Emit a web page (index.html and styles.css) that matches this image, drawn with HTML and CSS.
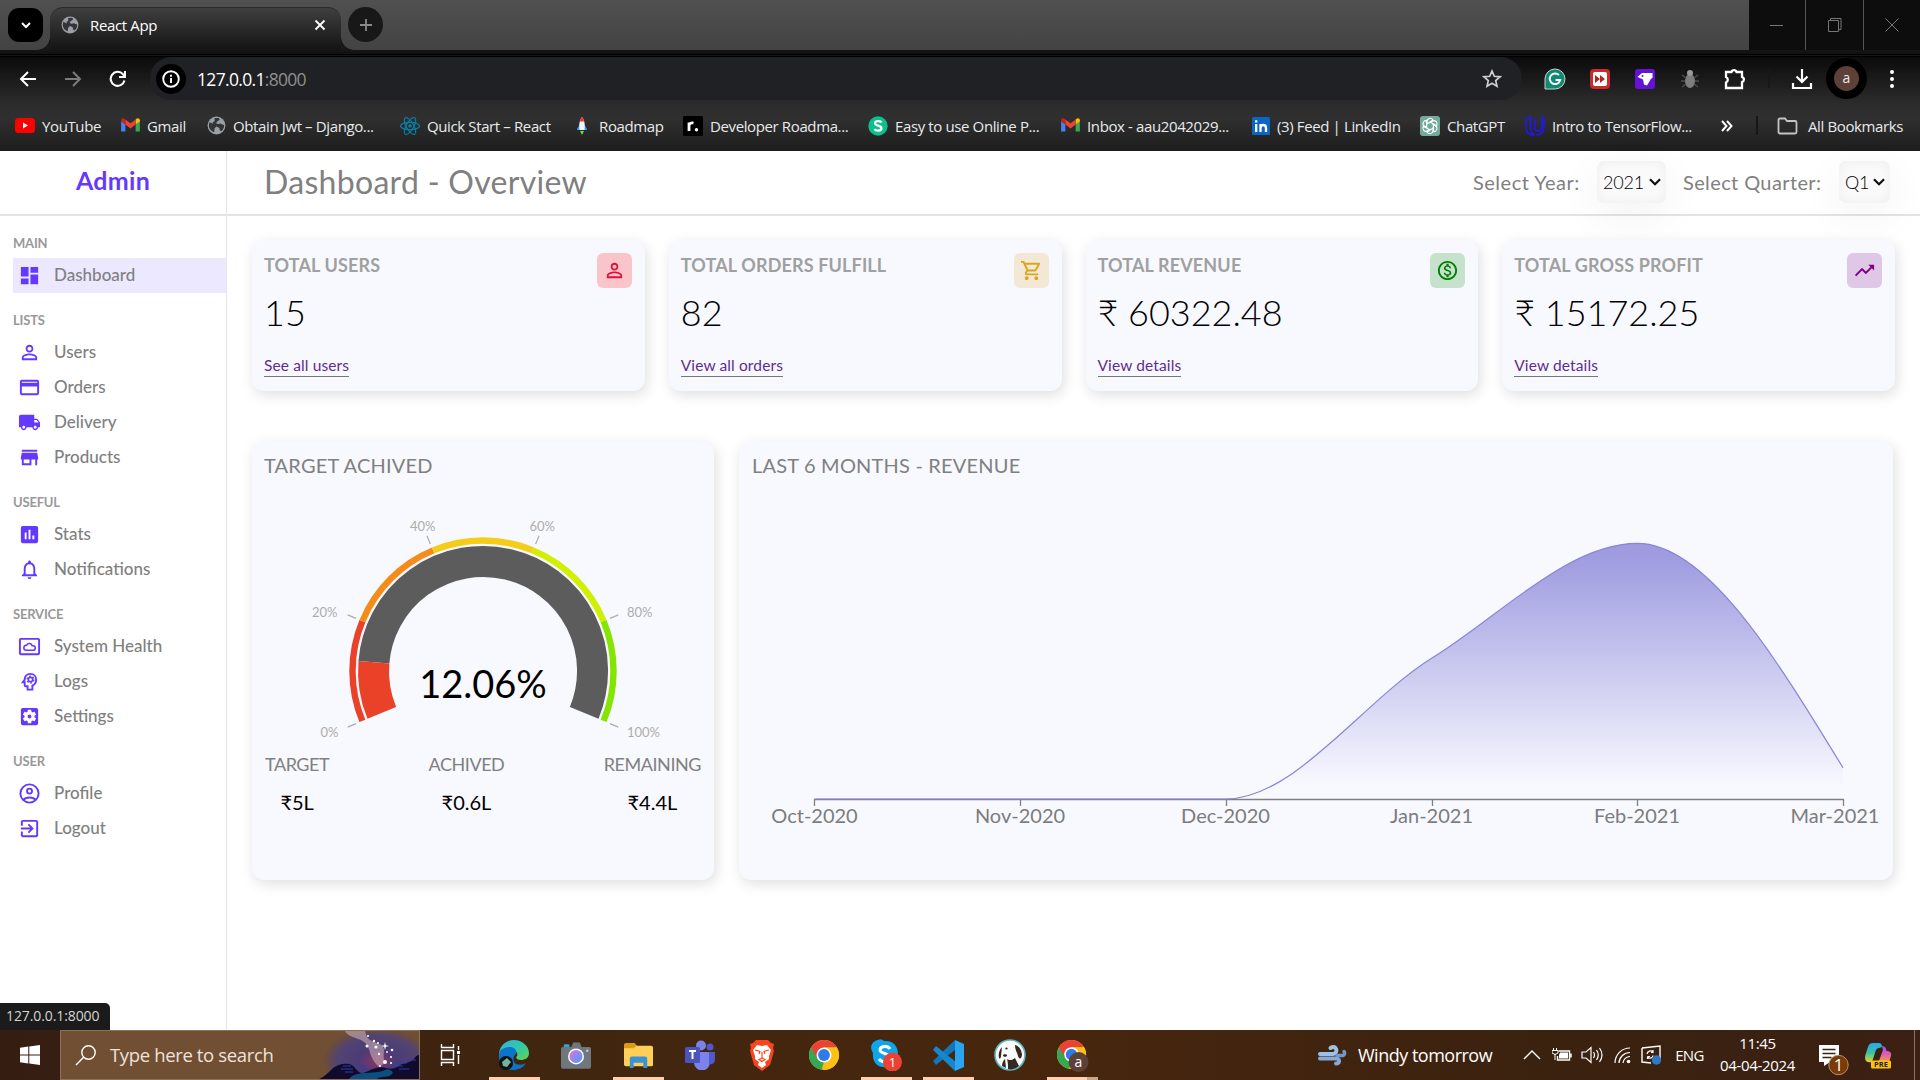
FILE: index.html
```html
<!DOCTYPE html>
<html lang="en">
<head>
<meta charset="utf-8">
<title>React App</title>
<link rel="stylesheet" href="styles.css">
</head>
<body>
<svg class="defs" width="0" height="0">
  <defs>
    <symbol id="globe" viewBox="0 0 20 20"><circle cx="10" cy="10" r="9.4" fill="#9aa0a6"/><path d="M2.500 6.500 6 8l3 1 1 2-2 2-.5 4C4 16 1.800 13 2 9.500zM8 2.200l4.500-.2 1 2-2.500 1.500-1.500 2 2 1 3-.5 1.500 1 2 .5c.2 3-1 5-3 6.500l-1.500-1-.5-2.500-3-1.500-3-2-1-2.500 2-1z" fill="#333438"/></symbol>
    <symbol id="gmail" viewBox="0 0 20 16"><path d="M0 3v11.500h4.500V7z" fill="#4285f4"/><path d="M20 3v11.500h-4.500V7z" fill="#34a853"/><path d="M15.500 1.500V7L20 3.700V2.500C20 .3 17.600-.6 15.500 1.500z" fill="#fbbc04"/><path d="M0 2.500V3.700L4.500 7V1.500C2.400-.6 0 .3 0 2.500z" fill="#c5221f"/><path d="M4.500 1.500 10 5.700l5.500-4.200V7L10 11.200 4.500 7z" fill="#ea4335"/></symbol>
    <symbol id="chrome" viewBox="0 0 32 32"><circle cx="16" cy="16" r="15" fill="#fbbc05"/><path d="M16 16 8.500 20.500 3 8.500A15 15 0 0 1 29 8.500H16z" fill="#ea4335"/><path d="M3 8.500 9.500 19.800 16 23l-2.500 7.800A15 15 0 0 1 3 8.500z" fill="#34a853"/><path d="M29 8.500H16L22.500 20l-7 11A15 15 0 0 0 29 8.500z" fill="#fbc116"/><circle cx="16" cy="16" r="7.500" fill="#fff"/><circle cx="16" cy="16" r="5.900" fill="#2f7bea"/></symbol>
    <symbol id="person" viewBox="0 0 24 24"><path d="M12 5.900c1.160 0 2.100.94 2.100 2.100s-.94 2.100-2.100 2.100S9.900 9.160 9.900 8s.94-2.100 2.100-2.100m0 9c2.970 0 6.100 1.460 6.100 2.100v1.100H5.900V17c0-.64 3.130-2.100 6.100-2.100M12 4C9.790 4 8 5.790 8 8s1.790 4 4 4 4-1.790 4-4-1.790-4-4-4zm0 9c-2.670 0-8 1.340-8 4v3h16v-3c0-2.660-5.330-4-8-4z"/></symbol>
    <linearGradient id="edgeA" x1="0" y1="0" x2="1" y2="1"><stop offset="0" stop-color="#2bb3e8"/><stop offset=".55" stop-color="#35c8a5"/><stop offset="1" stop-color="#63d648"/></linearGradient>
    <linearGradient id="lens" x1="0" y1="0" x2="1" y2="1"><stop offset=".2" stop-color="#c879e6"/><stop offset="1" stop-color="#3ca2f5"/></linearGradient>
    <linearGradient id="copA" x1="0" y1="0" x2="0" y2="1"><stop offset="0" stop-color="#2aa7f0"/><stop offset=".5" stop-color="#37c2a0"/><stop offset="1" stop-color="#e8cf2e"/></linearGradient>
    <linearGradient id="copB" x1="0" y1="0" x2="0" y2="1"><stop offset="0" stop-color="#8d5bf0"/><stop offset=".5" stop-color="#e05bb2"/><stop offset="1" stop-color="#f59a4a"/></linearGradient>
    <linearGradient id="area" x1="0" y1="0" x2="0" y2="1"><stop offset=".05" stop-color="#8884d8" stop-opacity=".8"/><stop offset=".95" stop-color="#8884d8" stop-opacity="0"/></linearGradient>
    <radialGradient id="sky"><stop offset="0" stop-color="#8b3560"/><stop offset=".35" stop-color="#4b3b78"/><stop offset=".75" stop-color="#4b4180" stop-opacity=".8"/><stop offset="1" stop-color="#5a4560" stop-opacity="0"/></radialGradient>
  </defs>
</svg>

<header class="browser">
  <div class="tabstrip">
    <button class="tab-search"><svg width="14" height="14" viewBox="0 0 14 14"><path d="M3 5l4 4 4-4" fill="none" stroke="#fff" stroke-width="2"/></svg></button>
    <div class="tab"><svg width="18" height="18"><use href="#globe"/></svg><span class="tab-title">React App</span><svg width="12" height="12" viewBox="0 0 12 12"><path d="M1.500 1.500l9 9m0-9l-9 9" stroke="#fff" stroke-width="1.800"/></svg></div>
    <button class="new-tab"><svg width="14" height="14" viewBox="0 0 14 14"><path d="M7 1v12M1 7h12" stroke="#8a8a8a" stroke-width="1.800"/></svg></button>
    <div class="win-controls">
      <span><svg width="14" height="14" viewBox="0 0 14 14"><path d="M0 7.500h13" stroke="#777"/></svg></span>
      <span><svg width="14" height="14" viewBox="0 0 14 14"><path d="M.5 2.500h10v11H.5zM2.500 2.500v-2h10.500v11h-2.500" fill="none" stroke="#777"/></svg></span>
      <span><svg width="14" height="14" viewBox="0 0 14 14"><path d="M.5.5l13 13m0-13l-13 13" stroke="#777"/></svg></span>
    </div>
  </div>
  <div class="toolbar">
    <div class="nav">
      <svg width="18" height="18" viewBox="0 0 18 18"><path d="M17 9H2.500M9 2 2 9l7 7" fill="none" stroke="#fff" stroke-width="2"/></svg>
      <svg width="18" height="18" viewBox="0 0 18 18"><path d="M1 9h14.500M9 2l7 7-7 7" fill="none" stroke="#7c7c7c" stroke-width="2"/></svg>
      <svg width="18" height="18" viewBox="0 0 18 18"><path d="M15.500 10.500A7 7 0 1 1 14 4.200L16 6.500" fill="none" stroke="#fff" stroke-width="2.100"/><path d="M17 1v7h-7V6h5V1z" fill="#fff"/></svg>
    </div>
    <div class="omnibox">
      <span class="info"><svg width="18" height="18" viewBox="0 0 18 18"><circle cx="9" cy="9" r="7.800" fill="none" stroke="#fff" stroke-width="1.900"/><path d="M9 8v5M9 4.800v2" stroke="#fff" stroke-width="1.900"/></svg></span>
      <span class="url">127.0.0.1<i>:8000</i></span>
      <svg class="star" width="20" height="20" viewBox="0 0 20 20"><path d="M10 2l2.300 5.300 5.700.5-4.300 3.800 1.300 5.600-5-3-5 3 1.300-5.600L2 7.800l5.700-.5z" fill="none" stroke="#d0d0d0" stroke-width="1.700"/></svg>
    </div>
    <div class="extensions">
      <svg width="22" height="22" viewBox="0 0 22 22"><path d="M1 21V11a10 10 0 1 1 10 10z" fill="#0f8a72" stroke="#c9d2cf"/><path d="M15 7.200A5.300 5.300 0 1 0 16.200 12H11.500" fill="none" stroke="#fff" stroke-width="1.900"/></svg>
      <svg width="20" height="20" viewBox="0 0 20 20"><rect width="20" height="20" rx="4" fill="#c92a2a"/><rect x="3" y="3" width="14" height="14" rx="2" fill="#fff"/><path d="M5 6l5 4-5 4zM10 6l5 4-5 4z" fill="#b32424"/></svg>
      <svg width="20" height="20" viewBox="0 0 20 20"><rect width="20" height="20" rx="3" fill="#6412d8"/><path d="M2.500 8 7 4h10.500v5q-2 0-2.500 2.500l-3 5-3-1-1-5z" fill="#fff"/><circle cx="7.500" cy="7" r="1" fill="#6412d8"/></svg>
      <svg width="18" height="20" viewBox="0 0 18 20"><ellipse cx="9" cy="12" rx="5" ry="7" fill="#7d7d7d"/><circle cx="9" cy="4" r="3" fill="#999"/><path d="M1 6l4 3M0 12h4M1 18l4-3M17 6l-4 3M18 12h-4M17 18l-4-3" stroke="#4c4c4c" stroke-width="1.500"/></svg>
      <svg width="22" height="22" viewBox="0 0 22 22"><path d="M2 4h5.500a2.600 2.600 0 0 1 5 0H18v5a2.600 2.600 0 0 1 0 5v6H2v-5.500a3 3 0 0 0 0-5.500z" fill="none" stroke="#fff" stroke-width="2.300"/></svg>
      <i class="sep"></i>
      <svg width="22" height="22" viewBox="0 0 22 22"><path d="M11 1v12M5.500 8.500 11 14l5.500-5.500M2 15v5h18v-5" fill="none" stroke="#fff" stroke-width="2.200"/></svg>
      <span class="avatar"><b>a</b></span>
      <svg width="6" height="20" viewBox="0 0 6 20"><g fill="#fff"><circle cx="3" cy="3" r="2"/><circle cx="3" cy="10" r="2"/><circle cx="3" cy="17" r="2"/></g></svg>
    </div>
  </div>
  <nav class="bookmarks">
    <a><svg width="20" height="15" viewBox="0 0 20 15"><rect width="20" height="15" rx="3.500" fill="#f00"/><path d="M8 4.500v6l5-3z" fill="#fff"/></svg><span>YouTube</span></a>
    <a><svg width="19" height="15"><use href="#gmail"/></svg><span>Gmail</span></a>
    <a><svg width="19" height="19"><use href="#globe"/></svg><span>Obtain Jwt – Django...</span></a>
    <a><svg width="20" height="20" viewBox="-10 -10 20 20"><g fill="none" stroke="#087ea4" stroke-width="1.200"><ellipse rx="9.500" ry="3.700"/><ellipse rx="9.500" ry="3.700" transform="rotate(60)"/><ellipse rx="9.500" ry="3.700" transform="rotate(120)"/></g><circle r="1.800" fill="#087ea4"/></svg><span>Quick Start – React</span></a>
    <a><svg width="20" height="20" viewBox="0 0 20 20"><path d="M5 13l3-5v6H5zM15 13l-3-5v6h3z" fill="#2aa3f4"/><path d="M10 1c3 4 3 8 2.500 13h-5C7 9 7 5 10 1z" fill="#f4f4f4"/><path d="M10 1c1.200 1.500 1.900 3 2.100 4.500H7.900C8.100 4 8.800 2.500 10 1z" fill="#e33"/><path d="M8 15h4l-2 4z" fill="#7bdb3a"/></svg><span>Roadmap</span></a>
    <a><svg width="20" height="20" viewBox="0 0 20 20"><rect width="20" height="20" rx="1.500" fill="#000"/><path d="M6 15V6.500M6 10c0-2.500 2-3.500 4.500-3" fill="none" stroke="#fff" stroke-width="2.800"/><circle cx="13.500" cy="13.700" r="1.700" fill="#fff"/></svg><span>Developer Roadma...</span></a>
    <a><svg width="20" height="20" viewBox="0 0 20 20"><circle cx="10" cy="10" r="9.700" fill="#0cc08e"/><path d="M13.500 6.500c-1-2-6.500-2-6.500.8 0 3 6.500 1.800 6.500 5 0 3-6 3-7 .7" fill="none" stroke="#fff" stroke-width="2.300"/></svg><span>Easy to use Online P...</span></a>
    <a><svg width="19" height="15"><use href="#gmail"/></svg><span>Inbox - aau2042029...</span></a>
    <a><svg width="18" height="18" viewBox="0 0 18 18"><rect width="18" height="18" rx="1.500" fill="#0a66c2"/><path d="M4.200 7v8M4.200 3.200v2.400M8.500 7v8M8.500 11c0-4 5.500-4 5.500 0v4" fill="none" stroke="#fff" stroke-width="2.300"/></svg><span>(3) Feed | LinkedIn</span></a>
    <a><svg width="20" height="20" viewBox="-10 -10 20 20"><rect x="-10" y="-10" width="20" height="20" rx="3" fill="#74aa9c"/><g fill="none" stroke="#fff" stroke-width="1.100"><path id="petal" d="M-3-1v-3.500a3.200 3.200 0 0 1 6-1.500L0-4-3-2.200"/><use href="#petal" transform="rotate(60)"/><use href="#petal" transform="rotate(120)"/><use href="#petal" transform="rotate(180)"/><use href="#petal" transform="rotate(240)"/><use href="#petal" transform="rotate(300)"/></g></svg><span>ChatGPT</span></a>
    <a><svg width="20" height="20" viewBox="0 0 20 20"><path d="M5.500 1 1 3v8c0 5 3 8 7 8 2 0 1-1 0-1.500C6 16.500 5.500 15 5.500 12zM10 3v9c0 3 4 4 6 1.500 1-1.500 1-2.500 1-4.500V1l2 1v9c0 5-4 8-8 8" fill="none" stroke="#2015ff" stroke-width="1.500"/></svg><span>Intro to TensorFlow...</span></a>
    <a><svg width="12" height="12" viewBox="0 0 12 12"><path d="M1 1l4.500 5L1 11M6 1l4.500 5L6 11" fill="none" stroke="#fff" stroke-width="2"/></svg></a>
    <i class="sep"></i>
    <a class="folder"><svg width="21" height="18" viewBox="0 0 21 18"><path d="M1.500 3a1.500 1.500 0 0 1 1.500-1.500h5l2 2.500h8A1.500 1.500 0 0 1 19.500 5.500v9.500a1.500 1.500 0 0 1-1.500 1.500H3A1.500 1.500 0 0 1 1.500 15z" fill="none" stroke="#c4c4c4" stroke-width="1.800"/></svg><span>All Bookmarks</span></a>
  </nav>
</header>

<div class="app">
  <aside class="sidebar">
    <div class="brand"><span>Admin</span></div>
    <nav class="menu">
      <h6>MAIN</h6>
      <a class="active"><svg viewBox="0 0 24 24"><path d="M3 13h8V3H3v10zm0 8h8v-6H3v6zm10 0h8V11h-8v10zm0-18v6h8V3h-8z"/></svg><span>Dashboard</span></a>
      <h6>LISTS</h6>
      <a><svg><use href="#person"/></svg><span>Users</span></a>
      <a><svg viewBox="0 0 24 24"><path d="M20 4H4c-1.110 0-1.990.89-1.990 2L2 18c0 1.110.89 2 2 2h16c1.110 0 2-.89 2-2V6c0-1.110-.89-2-2-2zm0 14H4v-7h16v7zm0-11H4V6h16v1z"/></svg><span>Orders</span></a>
      <a><svg viewBox="0 0 24 24"><path d="M20 8h-3V4H3c-1.100 0-2 .9-2 2v11h2c0 1.660 1.340 3 3 3s3-1.340 3-3h6c0 1.660 1.340 3 3 3s3-1.340 3-3h2v-5l-3-4zM6 18.500c-.83 0-1.500-.67-1.500-1.500s.67-1.500 1.500-1.500 1.500.67 1.500 1.500-.67 1.500-1.500 1.500zm13.500-9l1.960 2.500H17V9.500h2.500zm-1.500 9c-.83 0-1.500-.67-1.500-1.500s.67-1.500 1.500-1.500 1.500.67 1.500 1.500-.67 1.500-1.500 1.500z"/></svg><span>Delivery</span></a>
      <a><svg viewBox="0 0 24 24"><path d="M20 4H4v2h16V4zm1 10v-2l-1-5H4l-1 5v2h1v6h10v-6h4v6h2v-6h1zm-9 4H6v-4h6v4z"/></svg><span>Products</span></a>
      <h6>USEFUL</h6>
      <a><svg viewBox="0 0 24 24"><path d="M19 3H5c-1.100 0-2 .9-2 2v14c0 1.100.9 2 2 2h14c1.100 0 2-.9 2-2V5c0-1.100-.9-2-2-2zM9 17H7v-7h2v7zm4 0h-2V7h2v10zm4 0h-2v-4h2v4z"/></svg><span>Stats</span></a>
      <a><svg viewBox="0 0 24 24"><path d="M12 22c1.100 0 2-.9 2-2h-4c0 1.100.89 2 2 2zm6-6v-5c0-3.070-1.640-5.640-4.500-6.320V4c0-.83-.67-1.500-1.500-1.500s-1.500.67-1.500 1.500v.68C7.630 5.360 6 7.920 6 11v5l-2 2v1h16v-1l-2-2zm-2 1H8v-6c0-2.480 1.510-4.500 4-4.500s4 2.020 4 4.500v6z"/></svg><span>Notifications</span></a>
      <h6>SERVICE</h6>
      <a><svg viewBox="0 0 24 24"><path d="M21 3H3c-1.100 0-2 .9-2 2v14c0 1.100.9 2 2 2h18c1.100 0 2-.9 2-2V5c0-1.100-.9-2-2-2zm0 16H3V5h18v14z"/><path d="M8.500 16h7a2.400 2.400 0 0 0 .2-4.800h-.9a3.100 3.100 0 0 0-5.900-.4A2.600 2.600 0 0 0 8.500 16z" class="line"/></svg><span>System Health</span></a>
      <a><svg viewBox="0 0 24 24"><path d="M13 4C9.500 4 7 6.700 7 10l-2 2.700h2V16c0 .6.400 1 1 1h2v3.500h5V16.400c2.300-1 4-3.300 4-6.100C19 6.800 16.500 4 13 4z" class="line thick"/><circle cx="13" cy="10" r="2.300" class="line"/><circle cx="13" cy="10" r="3.600" class="line teeth"/></svg><span>Logs</span></a>
      <a><svg viewBox="0 0 24 24"><path d="M12 10c-1.100 0-2 .9-2 2s.9 2 2 2 2-.9 2-2-.9-2-2-2zm7-7H5c-1.110 0-2 .9-2 2v14c0 1.100.89 2 2 2h14c1.110 0 2-.9 2-2V5c0-1.100-.89-2-2-2zm-1.750 9c0 .23-.02.46-.05.68l1.480 1.160c.13.11.17.3.08.45l-1.400 2.420c-.09.15-.27.21-.43.15l-1.740-.7c-.36.28-.76.51-1.180.69l-.26 1.850c-.03.17-.18.3-.35.3h-2.800c-.17 0-.32-.13-.35-.29l-.26-1.850c-.43-.18-.82-.41-1.180-.69l-1.740.7c-.16.06-.34 0-.43-.15l-1.400-2.420c-.09-.15-.05-.34.08-.45l1.480-1.160c-.03-.23-.05-.46-.05-.69 0-.23.02-.46.05-.68l-1.480-1.160c-.13-.11-.17-.3-.08-.45l1.400-2.420c.09-.15.27-.21.43-.15l1.740.7c.36-.28.76-.51 1.180-.69l.26-1.850c.03-.17.18-.3.35-.3h2.800c.17 0 .32.13.35.29l.26 1.850c.43.18.82.41 1.180.69l1.740-.7c.16-.06.34 0 .43.15l1.400 2.420c.09.15.05.34-.08.45l-1.480 1.160c.03.23.05.46.05.69z"/></svg><span>Settings</span></a>
      <h6>USER</h6>
      <a><svg viewBox="0 0 24 24"><circle cx="12" cy="12" r="9.500" class="line thick"/><circle cx="12" cy="9.500" r="2.600" class="line thick"/><path d="M5.500 18.800c3-3.400 10-3.400 13 0" class="line thick"/></svg><span>Profile</span></a>
      <a><svg viewBox="0 0 24 24"><path d="M10.090 15.590L11.500 17l5-5-5-5-1.410 1.410L12.670 11H3v2h9.670l-2.580 2.590zM19 3H5c-1.110 0-2 .9-2 2v4h2V5h14v14H5v-4H3v4c0 1.100.89 2 2 2h14c1.100 0 2-.9 2-2V5c0-1.100-.9-2-2-2z"/></svg><span>Logout</span></a>
    </nav>
    <div class="status">127.0.0.1:8000</div>
  </aside>

  <main class="main">
    <div class="topbar">
      <h1>Dashboard - Overview</h1>
      <label class="l-year">Select Year:</label>
      <div class="select s-year"><span>2021</span><svg width="12" height="8" viewBox="0 0 12 8"><path d="M1 1.300l5 5 5-5" fill="none" stroke="#111" stroke-width="2.200"/></svg></div>
      <label class="l-quarter">Select Quarter:</label>
      <div class="select s-quarter"><span>Q1</span><svg width="12" height="8" viewBox="0 0 12 8"><path d="M1 1.300l5 5 5-5" fill="none" stroke="#111" stroke-width="2.200"/></svg></div>
    </div>

    <section class="widgets">
      <article class="card widget">
        <header><h3>TOTAL USERS</h3><span class="badge users"><svg><use href="#person"/></svg></span></header>
        <p class="num">15</p>
        <a>See all users</a>
      </article>
      <article class="card widget">
        <header><h3>TOTAL ORDERS FULFILL</h3><span class="badge orders"><svg viewBox="0 0 24 24"><path d="M15.550 13c.75 0 1.410-.41 1.750-1.030l3.580-6.490c.37-.66-.11-1.480-.87-1.480H5.210l-.94-2H1v2h2l3.600 7.590-1.350 2.440C4.520 15.370 5.480 17 7 17h12v-2H7l1.100-2h7.450zM6.160 6h12.150l-2.760 5H8.530L6.160 6zM7 18c-1.100 0-1.990.9-1.990 2S5.900 22 7 22s2-.9 2-2-.9-2-2-2zm10 0c-1.100 0-1.990.9-1.990 2s.89 2 1.990 2 2-.9 2-2-.9-2-2-2z"/></svg></span></header>
        <p class="num">82</p>
        <a>View all orders</a>
      </article>
      <article class="card widget">
        <header><h3>TOTAL REVENUE</h3><span class="badge revenue"><svg viewBox="0 0 24 24"><path d="M12 2C6.480 2 2 6.480 2 12s4.480 10 10 10 10-4.480 10-10S17.520 2 12 2zm0 18c-4.410 0-8-3.590-8-8s3.590-8 8-8 8 3.590 8 8-3.590 8-8 8zm.31-8.860c-1.770-.45-2.340-.94-2.340-1.670 0-.84.79-1.430 2.100-1.430 1.380 0 1.900.66 1.940 1.640h1.710c-.05-1.340-.87-2.570-2.490-2.970V5H10.900v1.690c-1.510.32-2.720 1.300-2.720 2.810 0 1.790 1.490 2.690 3.660 3.210 1.950.46 2.340 1.150 2.340 1.870 0 .53-.39 1.390-2.100 1.390-1.600 0-2.230-.72-2.320-1.640H8.040c.1 1.700 1.360 2.660 2.860 2.970V19h2.340v-1.670c1.520-.29 2.720-1.160 2.730-2.770-.01-2.200-1.900-2.960-3.660-3.420z"/></svg></span></header>
        <p class="num">₹ 60322.48</p>
        <a>View details</a>
      </article>
      <article class="card widget">
        <header><h3>TOTAL GROSS PROFIT</h3><span class="badge profit"><svg viewBox="0 0 24 24"><path d="M16 6l2.290 2.290-4.880 4.880-4-4L2 16.590 3.410 18l6-6 4 4 6.300-6.290L22 12V6z"/></svg></span></header>
        <p class="num">₹ 15172.25</p>
        <a>View details</a>
      </article>
    </section>

    <section class="charts">
      <article class="card target">
        <h2>TARGET ACHIVED</h2>
        <svg class="gauge" width="436" height="250" viewBox="265 495 436 250">
          <g fill="none" stroke-width="6.400" transform="translate(483 671)">
            <path d="M-120.600 49.900A130.500 130.500 0 0 1-120.600-49.900" stroke="#ea4228"/>
            <path d="M-120.600-49.900A130.500 130.500 0 0 1-49.900-120.600" stroke="#f58b19"/>
            <path d="M-49.900-120.600A130.500 130.500 0 0 1 49.900-120.600" stroke="#f5cd19"/>
            <path d="M49.900-120.600A130.500 130.500 0 0 1 120.600-49.900" stroke="#d0f000"/>
            <path d="M120.600-49.900A130.500 130.500 0 0 1 120.600 49.900" stroke="#84e500"/>
            <path d="M-109.100-8.800A109.500 109.500 0 1 1 101.200 41.900" stroke="#5c5c5c" stroke-width="31"/>
            <path d="M-101.200 41.900A109.500 109.500 0 0 1-109.100-8.800" stroke="#ea4228" stroke-width="31"/>
            <path d="M-127 52.600l-8.300 3.500M-127-52.600l-8.300-3.500M-52.600-127l-3.500-8.300M52.600-127l3.500-8.300M127-52.600l8.300-3.500M127 52.600l8.300 3.500" stroke="#adacab" stroke-width="1.200"/>
          </g>
          <g class="ticks">
            <text x="320.500" y="736.500">0%</text><text x="312" y="616.500">20%</text><text x="410" y="530.500">40%</text><text x="529.500" y="530.500">60%</text><text x="627" y="616.500">80%</text><text x="627" y="736.500">100%</text>
          </g>
          <text class="value" x="483" y="697.500" text-anchor="middle">12.06%</text>
        </svg>
        <dl>
          <div><dt>TARGET</dt><dd>₹5L</dd></div>
          <div><dt>ACHIVED</dt><dd>₹0.6L</dd></div>
          <div><dt>REMAINING</dt><dd>₹4.4L</dd></div>
        </dl>
      </article>
      <article class="card revenue-chart">
        <h2>LAST 6 MONTHS - REVENUE</h2>
        <svg width="1128" height="310" viewBox="752 520 1128 310">
          <path d="M814.500 799.500H1843.500M814.500 799v7M1020.500 799v7M1226.500 799v7M1432.500 799v7M1637.500 799v7M1843.500 799v7" fill="none" stroke="#808080" stroke-width="1.300"/>
          <path d="M814.500 799H1226C1294.600 799 1363.400 700.600 1432 658S1568.600 543.300 1637.300 543.300 1774.500 655.500 1843 767.700V799z" fill="url(#area)"/>
          <path d="M814.500 799H1226C1294.600 799 1363.400 700.600 1432 658S1568.600 543.300 1637.300 543.300 1774.500 655.500 1843 767.700" fill="none" stroke="#8884d8" stroke-width="1.200"/>
          <g class="months"><text x="814.500" y="823">Oct-2020</text><text x="1020" y="823">Nov-2020</text><text x="1225.500" y="823">Dec-2020</text><text x="1431.500" y="823">Jan-2021</text><text x="1637" y="823">Feb-2021</text><text x="1835" y="823">Mar-2021</text></g>
        </svg>
      </article>
    </section>
  </main>
</div>

<footer class="taskbar">
  <div class="start"><svg width="20" height="20" viewBox="0 0 20 20"><path d="M0 2.800 8.300 1.600V9.500H0zM9.300 1.500 20 0v9.500H9.300zM0 10.500h8.300v7.900L0 17.200zM9.300 10.500H20V20L9.300 18.500z" fill="#fff"/></svg></div>
  <div class="search">
    <svg width="22" height="22" viewBox="0 0 22 22"><circle cx="13.500" cy="8.500" r="6.700" fill="none" stroke="#fff" stroke-width="1.400"/><path d="M8.600 13.300 1 21" stroke="#fff" stroke-width="1.400"/></svg>
    <span>Type here to search</span>
    <svg class="scene" width="100" height="48" viewBox="0 0 100 48"><ellipse cx="58" cy="30" rx="55" ry="34" fill="url(#sky)"/><path d="M26 0c3 7 18 7 22 14s3 14 12 22l6-4c-4-10 4-16-8-20S48 5 46 0z" fill="#c9adb5" opacity=".6"/><path d="M0 48c5-2 9-6 13-10s11-6 17-5 8 9 13 9 14-8 24-5 12-4 20-5 9-8 13-8v24z" fill="#100b2c"/><path d="M30 48c8-10 26-3 38-10 4 1 8 3 4 6s-12 1-14 4z" fill="#0a4f80"/><path d="M24 35h8M22 38h12M26 41h8M40 35h7M42 38h8M72 35h12M76 32h12M88 29h9M80 38h10" stroke="#2b3fae" stroke-width="1.200"/><g fill="#fff"><path d="M66 11l.8 3.200L70 15l-3.200.8L66 19l-.8-3.200L62 15l3.200-.8z"/><circle cx="49" cy="5" r="1"/><circle cx="55" cy="10" r="1.200"/><circle cx="48" cy="15" r="1.500"/><circle cx="57" cy="16" r="1.600"/><circle cx="59" cy="12" r="1"/><circle cx="73" cy="19" r="1.300"/><circle cx="60" cy="23" r="1.200"/><circle cx="68" cy="21" r=".9"/><circle cx="72" cy="26" r="1.100"/><circle cx="66" cy="31" r="2"/><circle cx="72" cy="32" r="1.100"/><circle cx="61" cy="35" r="1"/></g></svg>
  </div>
  <div class="apps">
    <span class="task-view"><svg width="20" height="22" viewBox="0 0 20 22"><path d="M1.500 0v3.500h12V0M1.500 22v-3.500h12V22M1.500 6.500h12v9h-12zM18.500 2v4M18.500 11v9" fill="none" stroke="#fff" stroke-width="1.400"/><path d="M17 7h3v3h-3z" fill="#fff"/></svg></span>
    <span class="open"><svg width="32" height="32" viewBox="0 0 32 32"><path d="M1 16C1 7 8 1 16 1s15 6 15 13c0 5-4 7-8 7s-6-2-4-4c1-2 0-6-5-6-6 0-13 3-13 9z" fill="url(#edgeA)"/><path d="M1 15c1-5 6-7 11-7 5 0 7 4 6 7-4 3-3 8 0 10 3 1 7 1 10-1-3 5-8 7-13 7C6 31 0 24 1 15z" fill="#0c74c9"/><circle cx="8" cy="24" r="7" fill="#111"/><path d="M4 23l5-4 4 4-4 5-4-1z" fill="#6fb7a0"/></svg></span>
    <span><svg width="30" height="27" viewBox="0 0 32 28"><rect x="3" y="2" width="6" height="5" rx="1" fill="#2aa5de"/><path d="M2 5h9l2-5h7l2 5h8q2 0 2 2v19q0 2-2 2H2q-2 0-2-2V7q0-2 2-2z" fill="#6f777d"/><circle cx="16" cy="15" r="8.500" fill="#fff"/><circle cx="16" cy="15" r="7" fill="url(#lens)"/><circle cx="28" cy="9" r="1.300" fill="#bcd"/></svg></span>
    <span class="open"><svg width="29" height="25" viewBox="0 0 30 28" preserveAspectRatio="none"><path d="M0 2q0-2 2-2h9l3 4v4H0z" fill="#dd9b11"/><path d="M13 3h15q2 0 2 2v20q0 1-2 1H2q-2 0-2-2V6h10z" fill="#ffcf58"/><path d="M6 28V17q0-2 2-2h14q2 0 2 2v11h-4v-6H10v6z" fill="#3a93d5"/></svg></span>
    <span><svg width="30" height="30" viewBox="0 0 30 30"><circle cx="16" cy="5.500" r="5" fill="#7b83eb"/><circle cx="25" cy="7" r="3.500" fill="#5059c9"/><path d="M9 12h16v10a8 8 0 0 1-16 1z" fill="#7b83eb"/><path d="M24 12h6v8q-1 5-6 4z" fill="#5059c9"/><rect y="7" width="15" height="16" rx="1.500" fill="#4b53bc"/><path d="M4 11h7M7.500 11v8" stroke="#fff" stroke-width="2"/></svg></span>
    <span><svg width="26" height="31" viewBox="0 0 26 31"><path d="M7 0h12l3 3 3 1-1 4 1 3-4 14-8 6-8-6L1 11l1-3-1-4 3-1z" fill="#f9441d"/><path d="M13 6l5-1 4 5-2 6 0 3-4 3 1 3-4 3-4-3 1-3-4-3 0-3-2-6 4-5z" fill="#fff"/><path d="M6 10l5 1.500-1 2.500M20 10l-5 1.500 1 2.500M13 12v6l-3 1.500 3 2 3-2-3-1.500" fill="none" stroke="#f9441d" stroke-width="1.200"/></svg></span>
    <span><svg width="32" height="32"><use href="#chrome"/></svg></span>
    <span class="open"><svg width="32" height="32" viewBox="0 0 32 32"><path d="M8 1c3-1 5 0 6 1 9-1 14 5 14 13 3 7-1 14-8 13C8 30 2 24 3 14-1 8 2 2 8 1z" fill="#0ea5e9"/><path d="M20 10c-2-4-10-3-10 1s10 3 10 8-8 5-11 1" fill="none" stroke="#fff" stroke-width="3"/><circle cx="22.500" cy="23" r="9.500" fill="#ec4236"/><text x="22.500" y="27.500" class="count">1</text></svg></span>
    <span class="open"><svg width="31" height="31" viewBox="0 0 31 31"><path d="M22 0 0 21l3 4L23 9z" fill="#1177bd"/><path d="M22 31 0 10l3-4 20 16z" fill="#1587cc"/><path d="M22 0l9 4v23l-9 4z" fill="#2aa5f2"/></svg></span>
    <span><svg width="32" height="32" viewBox="0 0 32 32"><circle cx="16" cy="16" r="15" fill="#fbfbfb" stroke="#58b8c4" stroke-width="1.600"/><path d="M21 6c4 1 6 4 7 9 0 5-3 6-4 2-1-4-3-6-3-11z" fill="#35291f"/><path d="M8 8c-3 3-4 8-3 11 1 1 2 0 2-2z" fill="#35291f"/><path d="M13 20c2 2 6 1 8-1l4 8c-4 3-8 4-11 3 0-3 0-7-1-10z" fill="#35291f"/><path d="M8 27c0-3 1-5 3-7l1 9z" fill="#35291f"/><circle cx="12.500" cy="9.500" r="1.100" fill="#222"/><ellipse cx="11" cy="16.500" rx="2" ry="1.300" fill="#222"/></svg></span>
    <span class="open multi"><svg width="34" height="34" viewBox="0 0 34 34"><svg x="1" y="1" width="31" height="31"><use href="#chrome"/></svg><circle cx="23.500" cy="24" r="10" fill="#5d4037"/><text x="23.500" y="28.500" class="who">a</text></svg></span>
  </div>
  <div class="weather"><svg width="30" height="24" viewBox="0 0 30 24"><g fill="none" stroke-linecap="round" stroke-width="4"><path d="M2 11h13a3.500 3.500 0 1 0-2.500-6" stroke="#9fc0e6"/><path d="M2 15.500h17a2.500 2.500 0 1 1-1 5" stroke="#86a9d6"/><path d="M19 12.500h6a2.500 2.500 0 0 0 1-4" stroke="#7396c9" stroke-width="3.500"/></g></svg><span>Windy tomorrow</span></div>
  <div class="tray">
    <svg width="18" height="10" viewBox="0 0 18 10"><path d="M1 9l8-8 8 8" fill="none" stroke="#fff" stroke-width="1.400"/></svg>
    <svg width="20" height="14" viewBox="0 0 20 14"><path d="M6.500 3h11v9h-12V8M19 5.500v4" fill="none" stroke="#fff" stroke-width="1.400"/><path d="M8 4.500h8v6H7V7z" fill="#fff"/><path d="M1.500 0v2M4.500 0v2M0 2.500h6V5q-3 3-6 0zM3 6v6" stroke="#fff" fill="none"/></svg>
    <svg width="22" height="18" viewBox="0 0 22 18"><path d="M1 6h4l5-4.500v15L5 12H1zM12.500 6q2 3 0 6M15.500 4q3.500 5 0 10M18.500 2q5 7 0 14" fill="none" stroke="#fff" stroke-width="1.200"/></svg>
    <svg width="17" height="17" viewBox="0 0 17 17"><g fill="none" stroke="#fff" stroke-width="1.200"><path d="M1 16A15 15 0 0 1 16 1"/><path d="M5 16A11 11 0 0 1 16 5.500"/><path d="M9 16a7 7 0 0 1 7-6.500"/></g><circle cx="14.500" cy="14.500" r="1.800" fill="#fff"/></svg>
    <svg width="22" height="20" viewBox="0 0 22 20"><path d="M1 3l18-2v13M1 3v14l9 1" fill="none" stroke="#fff" stroke-width="1.400"/><path d="M6 9a3.500 3.500 0 0 1 6-2V5M12.500 7.500H10M12 10.500c-.5 3-4.500 3.500-5.500 1v2.500M6.500 11.500H9" fill="none" stroke="#fff" stroke-width="1.200"/><circle cx="15.500" cy="15" r="4.700" fill="#2f78c4"/></svg>
    <span class="lang">ENG</span>
  </div>
  <div class="clock"><span>11:45</span><span>04-04-2024</span></div>
  <div class="notif"><svg width="31" height="32" viewBox="0 0 31 32"><path d="M0 1h20v17h-9l-6 4v-4H0z" fill="#fff"/><path d="M3.500 5.500h13M3.500 9.500h13M3.500 13.500h9" stroke="#3c2410" stroke-width="1.500"/><circle cx="19.500" cy="21" r="9.700" fill="#7b3b06" stroke="#b98f6c"/><text x="19.500" y="27" class="ncount">1</text></svg></div>
  <div class="copilot"><svg width="27" height="26" viewBox="0 0 27 26"><path d="M8 0h6q3 0 3 4l-3 1q-3 0-4 5l-3 9q-4 1-6-1-2-3 0-8l2-6q1-4 5-4z" fill="url(#copA)"/><path d="M17 3q3 0 4 3l.6 2h1.400q4 1 3 5l-2 6H12q2 0 3-4l3-8z" fill="url(#copB)"/><rect x="6" y="17.500" width="20" height="8" rx="1.500" fill="#fdc30b"/><text x="16" y="24.400" class="pre">PRE</text></svg></div>
  <i class="show-desktop"></i>
</footer>
</body>
</html>
```
FILE: styles.css
```css
* { box-sizing: border-box; }
body { margin: 0; width: 1920px; height: 1080px; overflow: hidden; display: flex; flex-direction: column; background: #fff; font-family: Lato, "Noto Sans", sans-serif; }
h1, h2, h3, h6, p, dl, dd { margin: 0; font-weight: 400; }
svg { display: block; flex: none; }
button { border: 0; padding: 0; display: flex; align-items: center; justify-content: center; }
.defs { position: absolute; }

/* browser frame */
.browser { height: 151px; color: #e8eaed; font-family: "Open Sans", "Noto Sans", sans-serif; background: #1f1f1f; display: flex; flex-direction: column; }
.tabstrip { height: 57px; display: flex; background: linear-gradient(#505050, #434343 50px, #151515 50px, #111 54px, #000 54px, #000 55px, #161616 55px, #161616 56px, #000 56px); }
.tab-search { width: 35px; height: 34px; margin: 8px 7px 0 8px; border-radius: 11px; background: #000; }
.tab { position: relative; width: 291px; height: 43px; margin-top: 7px; padding: 0 15px 8px 11px; border-radius: 13px 13px 0 0; border-top: 1px solid #2a2a2a; background: linear-gradient(#3f3f3f, #141414); display: flex; align-items: center; }
.tab::before, .tab::after { content: ""; position: absolute; bottom: 0; width: 13px; height: 13px; }
.tab::before { left: -13px; background: radial-gradient(circle at 0 0, transparent 12.500px, #181818 13px); }
.tab::after { right: -13px; background: radial-gradient(circle at 100% 0, transparent 12.500px, #181818 13px); }
.tab-title { flex: 1; margin-left: 11px; font-size: 15px; line-height: 20px; padding-bottom: 1px; letter-spacing: -.35px; color: #fff; }
.new-tab { width: 35px; height: 35px; margin: 7px 0 0 7px; border-radius: 50%; background: #181818; }
.win-controls { margin-left: auto; height: 50px; display: grid; grid-template-columns: 56px 58px 57px; background: #0d0d0d; }
.win-controls span { display: flex; align-items: center; justify-content: center; }
.win-controls span + span { border-left: 1px solid #555; }
.toolbar { height: 46px; display: flex; align-items: flex-start; background: linear-gradient(#0b0b0b, #2b2b2b); }
.nav { width: 150px; height: 44px; padding-left: 19px; display: flex; gap: 27px; align-items: center; }
.omnibox { width: 1372px; height: 43px; padding: 0 20px 0 6px; border-radius: 22px; background: #202124; display: flex; align-items: center; }
.info { width: 30px; height: 30px; border-radius: 50%; background: #000; display: flex; align-items: center; justify-content: center; }
.url { margin-left: 11px; font-size: 17.500px; letter-spacing: -.68px; color: #fff; flex: 1; }
.url i { font-style: normal; color: #8f8f8f; }
.extensions { flex: 1; height: 43px; display: grid; grid-template-columns: 45px 45px 45px 45px 45px 23px 43px 47px 43px; padding-left: 10px; align-items: center; justify-items: center; }
.sep { width: 2px; height: 19px; background: #171717; }
.avatar { width: 41px; height: 41px; border-radius: 50%; background: #000; display: flex; align-items: center; justify-content: center; }
.avatar b { width: 25px; height: 25px; border-radius: 50%; background: #5d4037; font: 400 14px/23px "Open Sans", sans-serif; text-align: center; }
.bookmarks { height: 48px; padding: 0 0 3px 15px; display: grid; grid-template-columns: 106px 86px 193px 172px 111px 185px 193px 191px 168px 105px 196px 35px 21px auto; align-items: center; background: linear-gradient(#2b2b2b, #303030 30%, #1d1d1d); font-size: 15px; letter-spacing: -.38px; white-space: nowrap; }
.bookmarks a { display: flex; align-items: center; gap: 7px; }
.bookmarks .folder { gap: 10px; }

/* application */
.app { height: 879px; display: flex; }
.sidebar { width: 227px; flex: none; border-right: 1px solid #e6e6e6; display: flex; flex-direction: column; }
.brand { height: 65px; border-bottom: 2px solid #e3e3e3; display: flex; align-items: center; justify-content: center; font-size: 25px; font-weight: 700; letter-spacing: .3px; color: #6439ff; }
.brand span { margin-top: -5px; }
.menu { padding-left: 13px; flex: 1; }
.menu h6 { height: 42px; padding-top: 17px; font-size: 13px; line-height: 20px; font-weight: 700; letter-spacing: -.2px; color: #999; }
.menu a { height: 35px; padding-left: 5px; display: flex; align-items: center; color: #808080; font-size: 17px; font-weight: 500; }
.menu a span { padding-bottom: 2px; }
.menu svg { width: 23px; height: 23px; margin-right: 13px; fill: #6439ff; }
.menu .active { background: #ece8ff; }
.menu .line { fill: none; stroke: #6439ff; stroke-width: 1.600; }
.menu .thick { stroke-width: 2; }
.menu .teeth { stroke-width: 1.400; stroke-dasharray: 1.900 1.870; }
.status { width: 110px; height: 27px; padding-left: 6px; background: #1b1b1b; border-top-right-radius: 5px; font: 400 14px/26px "Open Sans", sans-serif; letter-spacing: -.1px; color: #d5d5d5; }
.main { flex: 1; min-width: 0; }
.topbar { height: 65px; border-bottom: 2px solid #e3e3e3; padding: 0 30px 2px 37px; display: flex; align-items: center; color: #808080; }
.topbar h1 { flex: 1; font-size: 32px; letter-spacing: .3px; }
.topbar label { font-size: 20px; width: 124px; letter-spacing: .5px; }
.topbar .l-quarter { width: 156px; margin-left: 17px; letter-spacing: .38px; }
.select { width: 69px; height: 42px; border-radius: 7px; padding: 0 5px 0 6px; display: flex; align-items: center; justify-content: space-between; color: #000; font-size: 18px; letter-spacing: -.2px; font-weight: 300; background: #fafafa; box-shadow: inset 0 0 12px rgba(0,0,0,.05), 0 12px 45px rgba(0,0,0,.06); }
.s-quarter { width: 51px; }
.card { background: #f8f9ff; border-radius: 12px; box-shadow: 2px 4px 14px rgba(0,0,0,.13); }
.widgets { padding: 24px 25px 0 25px; display: grid; grid-template-columns: repeat(4, 1fr); gap: 24px; }
.widget { height: 151px; padding: 13px 13px 13px 12px; display: flex; flex-direction: column; align-items: flex-start; }
.widget header { width: 100%; height: 35px; display: flex; justify-content: space-between; }
.widget h3 { font-size: 18px; line-height: 24px; font-weight: 700; letter-spacing: .14px; color: #a0a0a0; }
.badge { width: 35px; height: 35px; border-radius: 6px; display: flex; align-items: center; justify-content: center; }
.badge svg { width: 23px; height: 23px; fill: currentColor; }
.users { color: #dc143c; background: #f9c5cb; }
.orders { color: #daa520; background: #f2e8d5; }
.revenue { color: #008000; background: #c6e1cc; }
.profit { color: #800080; background: #dfc7e6; }
.num { font-size: 36px; line-height: 44px; font-weight: 300; margin-top: 2px; color: #000; }
.widget a { margin-top: 21px; font-size: 15.500px; line-height: 21px; letter-spacing: .12px; color: #5d2c91; border-bottom: 1px solid #777; }
.charts { padding: 50px 27px 0 25px; display: grid; grid-template-columns: 462px minmax(0, 1fr); gap: 25px; }
.charts .card { height: 439px; padding: 12px 13px; }
.charts h2 { font-size: 20px; line-height: 25px; height: 26px; letter-spacing: .2px; color: #808080; }
.target h2 { margin-left: -1px; }
.gauge { margin: 16px 0 0; }
.ticks { font-size: 13px; fill: #adacab; }
.value { font-size: 38px; }
.target dl { display: flex; justify-content: space-between; text-align: center; margin-top: 7px; }
dt { font-size: 18px; line-height: 24px; letter-spacing: -.45px; color: #808080; }
dd { font-size: 20px; line-height: 24px; margin-top: 14px; }
.revenue-chart svg { margin-top: 41px; overflow: visible; }
.months { font-size: 20px; fill: #7c7c7c; text-anchor: middle; }

/* taskbar */
.taskbar { height: 50px; display: flex; background: linear-gradient(90deg, #361d12, #41260f 30%, #48260e 55%, #3b220f 80%, #3b2013); color: #fff; font-family: "Open Sans", "Noto Sans", sans-serif; }
.start { width: 60px; display: flex; align-items: center; justify-content: center; }
.search { width: 360px; height: 50px; padding-left: 14px; border: 1px solid #8d705a; background: #704f32; display: flex; align-items: center; }
.search span { margin-left: 13px; padding-bottom: 1px; flex: 1; font-size: 18.500px; letter-spacing: -.36px; color: #eee3da; }
.apps { display: grid; grid-template-columns: repeat(11, 62px); margin-left: 1px; }
.apps span { display: flex; align-items: center; justify-content: center; }
.apps .task-view { padding-right: 4px; }
.open { background: linear-gradient(#ffcfae, #ffcfae) 50% 100% / 51px 3px no-repeat; }
.multi { background: linear-gradient(90deg, #ffcfae 40px, #c9a58c 40px) 50% 100% / 51px 3px no-repeat; }
.count, .who, .ncount, .pre { text-anchor: middle; fill: #fff; font-size: 13px; }
.who { font-size: 14px; }
.ncount { font-size: 17px; }
.pre { font-size: 7.500px; font-weight: 700; fill: #222; }
.weather { width: 205px; margin-left: 215px; display: flex; align-items: center; gap: 10px; font-size: 18px; letter-spacing: -.5px; white-space: nowrap; }
.tray { width: 190px; display: grid; grid-template-columns: 30px 30px 30px 30px 30px auto; align-items: center; justify-items: center; margin-left: -6px; }
.lang { font-size: 15px; letter-spacing: -.6px; margin-left: 5px; }
.clock { width: 100px; display: flex; flex-direction: column; align-items: center; padding: 2px 0 0 1px; font-size: 15px; letter-spacing: -.35px; line-height: 22px; }
.notif { width: 58px; padding: 14px 0 0 12px; }
.copilot { padding-top: 13px; }
.show-desktop { width: 1px; margin-left: auto; margin-right: 5px; background: #8a7566; }
```
